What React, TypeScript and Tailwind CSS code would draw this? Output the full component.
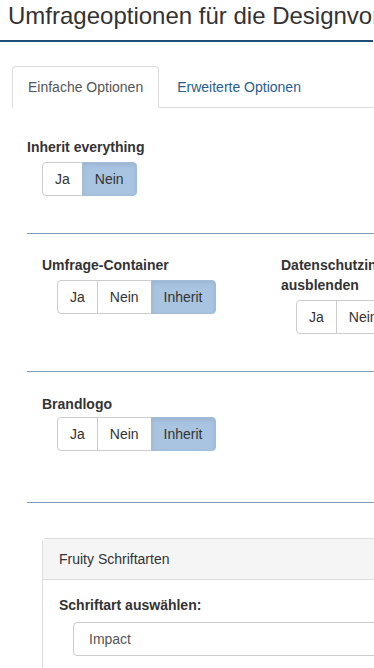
import React, { useState } from 'react';

type Choice = { label: string; value: string };

const ButtonGroup: React.FC<{ options: Choice[]; active: string; className?: string }> = ({ options, active, className }) => {
  const [value, setValue] = useState(active);
  return (
    <div className={`flex ${className ?? ''}`}>
      {options.map((opt, i) => {
        const isActive = opt.value === value;
        const first = i === 0;
        const last = i === options.length - 1;
        return (
          <button
            key={opt.value}
            onClick={() => setValue(opt.value)}
            className={`h-[34px] px-[12px] text-[14px] leading-[20px] text-[#333] border ${
              isActive
                ? 'bg-[#a8c4e1] border-[#a0bcd8] shadow-[inset_0_2px_4px_rgba(0,0,0,0.08)]'
                : 'bg-white border-[#ccc]'
            } ${first ? 'rounded-l-[4px]' : '-ml-px'} ${last ? 'rounded-r-[4px]' : ''}`}
          >
            {opt.label}
          </button>
        );
      })}
    </div>
  );
};

const twoWay: Choice[] = [
  { label: 'Ja', value: 'Y' },
  { label: 'Nein', value: 'N' },
];

const threeWay: Choice[] = [
  { label: 'Ja', value: 'Y' },
  { label: 'Nein', value: 'N' },
  { label: 'Inherit', value: 'I' },
];

const App: React.FC = () => {
  const [tab, setTab] = useState('basic');

  return (
    <div
      className="w-[374px] h-[668px] overflow-hidden bg-white text-[#333] text-[14px] leading-[20px]"
      style={{ fontFamily: '"Liberation Sans", Arial, sans-serif' }}
    >
      <div className="w-[640px]">
        <div className="w-[373px] border-b-2 border-[#1f4e79] pt-[3px] pb-[11px]">
          <h3 className="pl-[8px] text-[24px] leading-[26px] whitespace-nowrap text-[#333]">
            Umfrageoptionen für die Designvorlage
          </h3>
        </div>

        {/* tabs */}
        <ul className="ml-[12px] mt-[24px] flex border-b border-[#ddd]">
          <li className="-mb-px mr-[2px]">
            <button
              onClick={() => setTab('basic')}
              className={`px-[15px] py-[10px] leading-[20px] border rounded-t-[4px] ${
                tab === 'basic' ? 'text-[#555] bg-white border-[#ddd] border-b-transparent' : 'text-[#2a5d8c] border-transparent'
              }`}
            >
              Einfache Optionen
            </button>
          </li>
          <li className="-mb-px">
            <button
              onClick={() => setTab('advanced')}
              className={`px-[15px] py-[10px] leading-[20px] border rounded-t-[4px] ${
                tab === 'advanced' ? 'text-[#555] bg-white border-[#ddd] border-b-transparent' : 'text-[#2a5d8c] border-transparent'
              }`}
            >
              Erweiterte Optionen
            </button>
          </li>
        </ul>

        <div className="pl-[27px] pt-[29px]">
          <label className="block font-bold">Inherit everything</label>
          <ButtonGroup options={twoWay} active="N" className="ml-[15px] mt-[5px]" />

          <hr className="mt-[37px] border-0 border-t border-[#7d9bb9]" />

          <div className="grid grid-cols-[239px_239px] pt-[21px] pb-[37px]">
            <div className="pl-[15px]">
              <label className="block font-bold">Umfrage-Container</label>
              <ButtonGroup options={threeWay} active="I" className="ml-[15px] mt-[5px]" />
            </div>
            <div className="pl-[15px]">
              <label className="block font-bold w-[140px]">Datenschutzinformationen ausblenden</label>
              <ButtonGroup options={threeWay} active="I" className="ml-[15px] mt-[5px]" />
            </div>
          </div>

          <hr className="border-0 border-t border-[#7d9bb9]" />

          <div className="pl-[15px] pt-[22px] pb-[51px]">
            <label className="block font-bold">Brandlogo</label>
            <ButtonGroup options={threeWay} active="I" className="ml-[15px] mt-[3px]" />
          </div>

          <hr className="border-0 border-t border-[#7d9bb9]" />

          <div className="ml-[15px] mt-[35px] border border-[#ddd] rounded-[4px]">
            <div className="bg-[#f5f5f5] border-b border-[#ddd] px-[16px] py-[10px] text-[#333]">
              Fruity Schriftarten
            </div>
            <div className="px-[16px] pt-[15px] pb-[15px]">
              <label className="block font-bold">Schriftart auswählen:</label>
              <div className="ml-[14px] mt-[7px] h-[34px] border border-[#ccc] rounded-[4px] px-[15px] flex items-center text-[#555]">
                Impact
              </div>
            </div>
          </div>
        </div>
      </div>
    </div>
  );
};

export default App;
